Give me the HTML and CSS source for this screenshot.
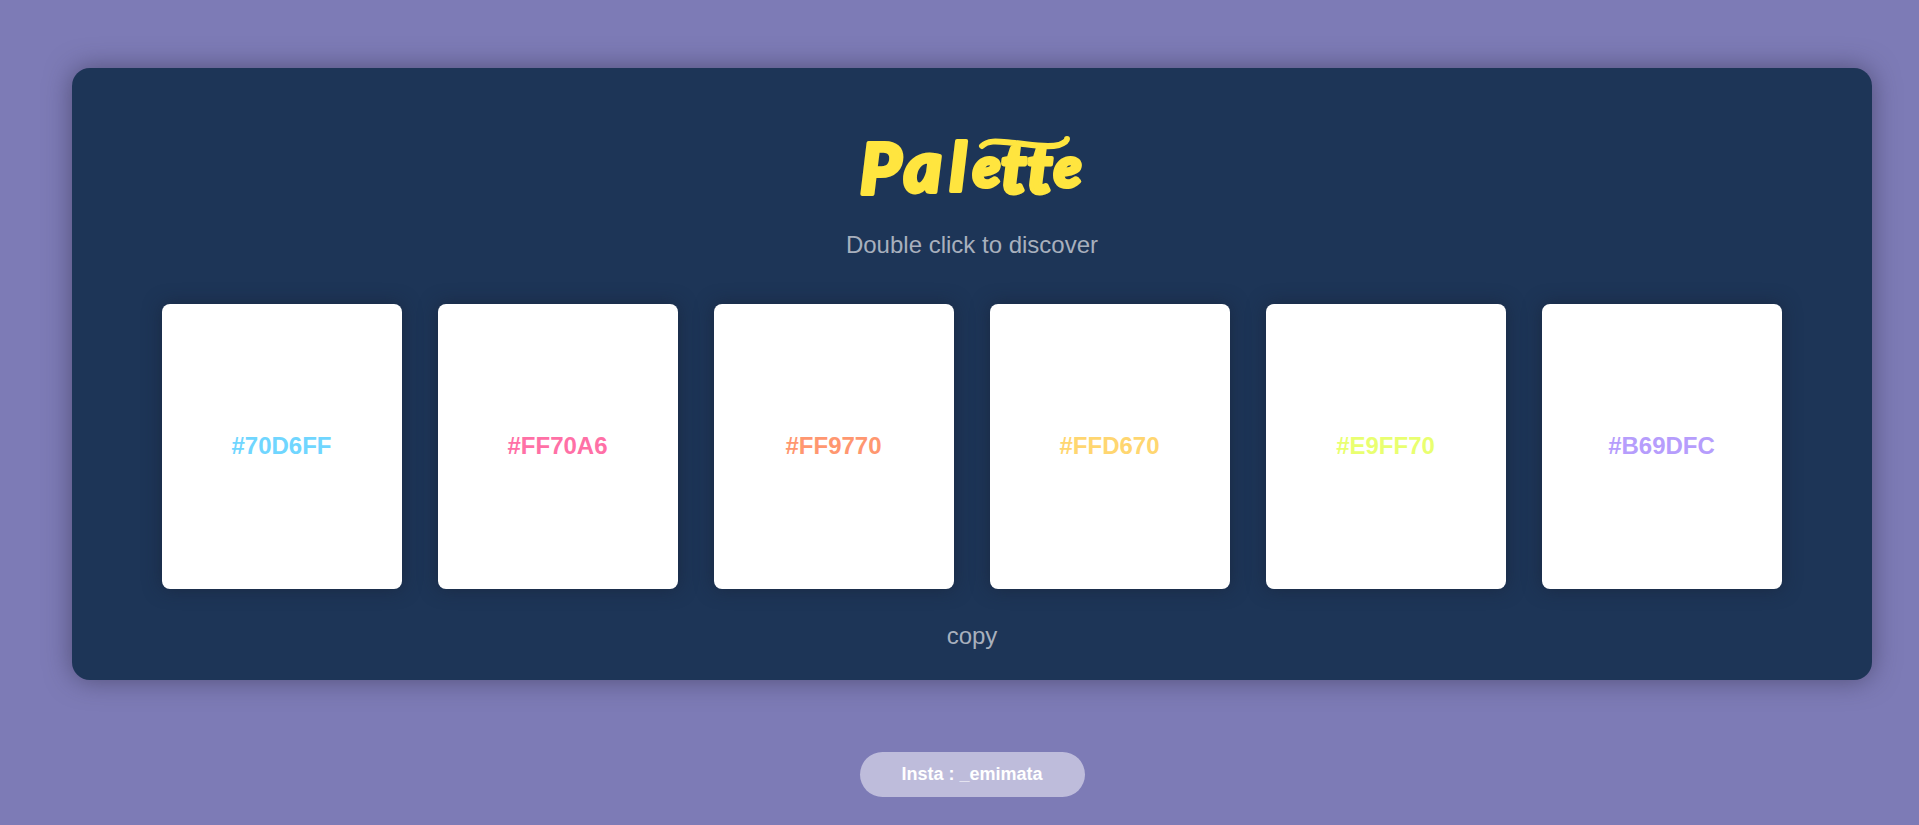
FILE: index.html
```html
<!DOCTYPE html>
<html lang="en">
<head>
<meta charset="utf-8">
<title>Palette</title>
<link rel="stylesheet" href="styles.css">
</head>
<body>
<main class="panel">
  <h1 class="title">
    <svg class="title-art" viewBox="0 0 240 72" role="img" aria-label="Palette">
      <text class="title-text" y="62 60 59 55 61 61 55" x="8 52 98 121 149 175 202"><tspan class="cap">P</tspan><tspan class="mid">a</tspan><tspan class="tall">l</tspan><tspan class="low">e</tspan><tspan class="tee">tt</tspan><tspan class="low">e</tspan></text>
      <path class="flourish" d="M130 14C137 7 149 10 163 11C181 13 195 16 207 13Q215 10 215 7"/>
    </svg>
  </h1>
  <p class="subtitle">Double click to discover</p>
  <section class="swatches">
    <div class="swatch blue">#70D6FF</div>
    <div class="swatch pink">#FF70A6</div>
    <div class="swatch orange">#FF9770</div>
    <div class="swatch yellow">#FFD670</div>
    <div class="swatch lime">#E9FF70</div>
    <div class="swatch violet">#B69DFC</div>
  </section>
  <p class="copy">copy</p>
</main>
<a class="insta">Insta : _emimata</a>
</body>
</html>
```
FILE: styles.css
```css
* { box-sizing: border-box; }
body {
  margin: 0;
  padding: 68px 47px 0 72px;
  height: 825px;
  overflow: hidden;
  background: #7d7bb6;
  font-family: "Liberation Sans", Arial, sans-serif;
  display: flex;
  flex-direction: column;
  align-items: center;
}
.panel {
  width: 1800px;
  height: 612px;
  flex: none;
  padding-top: 64px;
  border-radius: 18px;
  background: #1d3557;
  box-shadow: 0 0 27px rgba(45, 42, 65, .55);
  display: flex;
  flex-direction: column;
  align-items: center;
}
.title { margin: 0; height: 72px; }
.title-art { display: block; width: 240px; height: 72px; overflow: visible; }
.title-text {
  font-family: Lato, sans-serif;
  font-weight: 900;
  font-style: italic;
  fill: #ffe53f;
  stroke: #ffe53f;
  stroke-width: 4px;
  stroke-linejoin: round;
}
.cap { font-size: 70px; }
.mid { font-size: 72px; }
.low { font-size: 56px; }
.tall { font-size: 66px; }
.tee { font-size: 68px; }
.flourish { fill: none; stroke: #ffe53f; stroke-width: 6px; stroke-linecap: round; }
.subtitle, .copy {
  margin: 0;
  font-size: 24px;
  line-height: 28px;
  color: #a8b0bd;
}
.subtitle { margin-top: 27px; }
.swatches { display: flex; gap: 36px; margin-top: 45px; }
.swatch {
  width: 240px;
  height: 285px;
  padding: 0 1px 2px 0;
  border-radius: 8px;
  background: #fff;
  box-shadow: 0 0 18px rgba(25, 34, 52, .6);
  display: flex;
  align-items: center;
  justify-content: center;
  font-size: 24px;
  font-weight: 700;
}
.blue { color: #70d6ff; }
.pink { color: #ff70a6; }
.orange { color: #ff9770; }
.yellow { color: #ffd670; }
.lime { color: #e9ff70; }
.violet { color: #b69dfc; }
.copy { margin-top: 33px; }
.insta {
  width: 225px;
  height: 45px;
  flex: none;
  margin-top: 72px;
  border-radius: 23px;
  background: #bebcdb;
  color: #fff;
  font-size: 18px;
  font-weight: 700;
  line-height: 44px;
  text-align: center;
}
```
